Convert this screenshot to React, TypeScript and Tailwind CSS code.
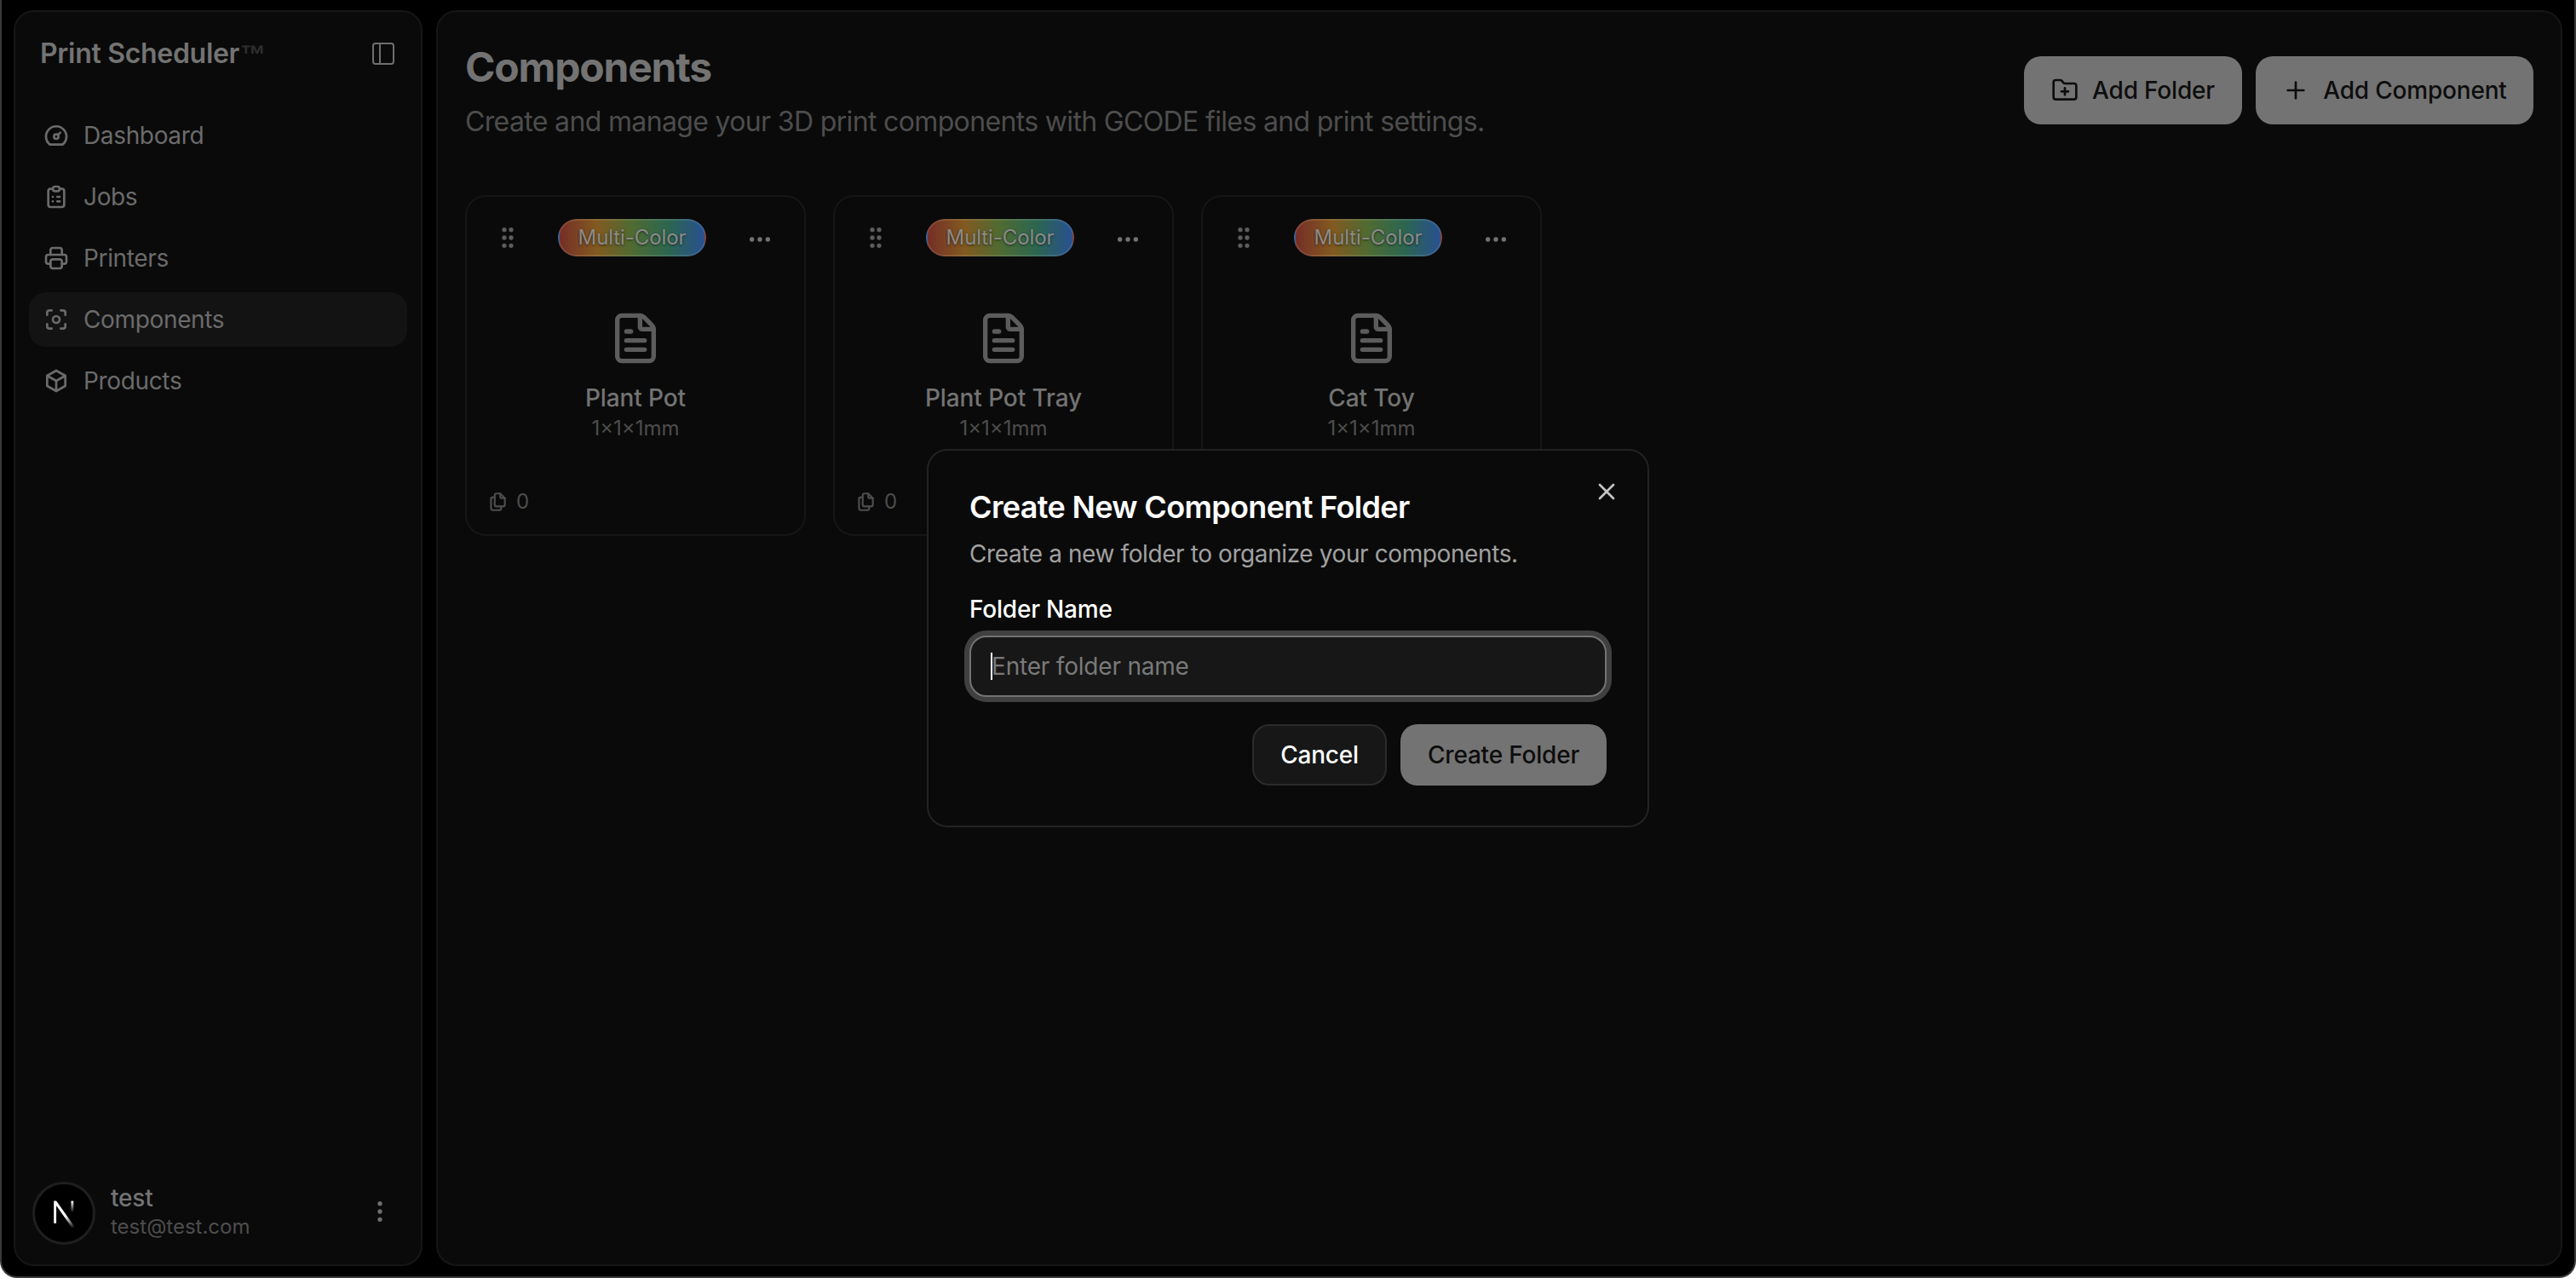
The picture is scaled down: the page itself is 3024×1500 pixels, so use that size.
import { EllipsisVertical, Ellipsis, FileText, FolderPlus, GripVertical, PanelLeft, Plus, X } from "lucide-react";
import { TbBox, TbCapture, TbClipboardList, TbDashboard, TbFiles, TbPrinter } from "react-icons/tb";

const navItems = [
  { label: "Dashboard", icon: TbDashboard },
  { label: "Jobs", icon: TbClipboardList },
  { label: "Printers", icon: TbPrinter },
  { label: "Components", icon: TbCapture, active: true },
  { label: "Products", icon: TbBox },
];

const components = ["Plant Pot", "Plant Pot Tray", "Cat Toy"];

function Sidebar() {
  return (
    <aside className="flex h-full w-[480px] shrink-0 flex-col rounded-[24px] border-2 border-[#161616] bg-[#0a0a0a]">
      <div className="flex items-center justify-between pl-[29px] pr-[28px] pt-[29px]">
        <div className="flex items-baseline text-[32px] leading-[40px] font-semibold tracking-[-0.3px] text-[#737373]">
          Print Scheduler
          <span className="ml-[1px] font-['Liberation_Sans',sans-serif] text-[30px] font-bold text-[#2e2e2e]">™</span>
        </div>
        <PanelLeft className="-mt-[2px] h-8 w-8 text-[#6e6e6e]" strokeWidth={1.5} />
      </div>

      {/* 导航 */}
      <nav className="mt-[43px] flex flex-col gap-2 px-4">
        {navItems.map((item) => (
          <div
            key={item.label}
            className={
              item.active
                ? "flex h-16 items-center gap-4 rounded-[20px] bg-[#131313] px-4 text-[28px] tracking-[-0.35px] text-[#6b6b6b]"
                : "flex h-16 items-center gap-4 rounded-[20px] px-4 text-[28px] tracking-[-0.35px] text-[#6b6b6b]"
            }
          >
            <item.icon className="h-8 w-8 shrink-0" strokeWidth={2} />
            <span>{item.label}</span>
          </div>
        ))}
      </nav>

      {/* 用户 */}
      <div className="mt-auto flex items-center pb-[23px] pl-[20px] pr-[32px]">
        <div className="flex h-[74px] w-[74px] shrink-0 items-center justify-center rounded-full border-[3px] border-[#1f1f1f] bg-black">
          <svg viewBox="0 0 32 32" className="h-[42px] w-[42px]">
            <defs>
              <linearGradient id="nextDiag" x1="0" y1="0" x2="1" y2="1">
                <stop offset="0.55" stopColor="#ffffff" />
                <stop offset="1" stopColor="#ffffff" stopOpacity="0" />
              </linearGradient>
              <linearGradient id="nextBar" x1="0" y1="0" x2="0" y2="1">
                <stop offset="0" stopColor="#ffffff" />
                <stop offset="0.8" stopColor="#ffffff" stopOpacity="0" />
              </linearGradient>
            </defs>
            <path d="M7 5h2.2L26 28.5h-3L9.2 9.2V25H7z" fill="url(#nextDiag)" />
            <rect x="22.4" y="5" width="2.2" height="13" fill="url(#nextBar)" />
          </svg>
        </div>
        <div className="mb-[5px] ml-[18px] flex min-w-0 flex-1 flex-col">
          <span className="text-[28px] leading-[36px] font-medium tracking-[-0.2px] text-[#737373]">test</span>
          <span className="text-[24px] leading-[32px] text-[#4d4d4d]">test@test.com</span>
        </div>
        <EllipsisVertical className="mb-[4px] h-8 w-8 text-[#6e6e6e]" />
      </div>
    </aside>
  );
}

function ComponentCard({ name }: { name: string }) {
  return (
    <div className="flex h-[400px] w-[400px] flex-col rounded-[24px] border-2 border-[#161616] bg-[#0a0a0a]">
      <div className="flex items-center justify-between pl-[32px] pr-[36px] pt-[26px]">
        <GripVertical className="h-8 w-8 text-[#5c5c5c]" />
        <span className="-ml-[4px] flex h-[44px] w-[174px] items-center justify-center rounded-full border-2 border-white/10 bg-[linear-gradient(90deg,#752e27,#82591f,#4f6b32,#2c6650,#28508f)] text-[24px] tracking-[-0.1px] text-[#8a8a8a] [text-shadow:0_1px_3px_rgba(0,0,0,0.6)]">
          Multi-Color
        </span>
        <Ellipsis className="mt-[4px] h-8 w-8 text-[#737373]" />
      </div>
      <div className="mt-[64px] flex flex-col items-center">
        <FileText className="h-16 w-16 text-[#5c5c5c]" />
        <span className="mt-[20px] text-[28px] leading-[36px] font-medium tracking-[-0.1px] text-[#737373]">{name}</span>
        <span className="mt-[2px] text-[24px] leading-[32px] text-[#4d4d4d]">1×1×1mm</span>
      </div>
      <div className="mt-auto flex items-center gap-[9px] pb-[22px] pl-[23px] text-[24px] leading-[32px] text-[#4d4d4d]">
        <TbFiles className="h-[26px] w-[26px]" />
        <span>0</span>
      </div>
    </div>
  );
}

function FolderDialog() {
  return (
    <div className="absolute left-[1086px] top-[527px] flex h-[444px] w-[848px] flex-col rounded-[24px] border-2 border-[#232323] bg-[#0a0a0a] px-[48px] pt-[44px]">
      <X className="absolute right-[32px] top-[32px] h-8 w-8 text-[#c4c4c4]" />
      <h2 className="text-[36px] leading-[44px] font-semibold tracking-[-0.65px] text-white">Create New Component Folder</h2>
      <p className="mt-[13px] text-[28px] leading-[40px] tracking-[-0.4px] text-[#a1a1a1]">
        Create a new folder to organize your components.
      </p>
      <label className="mt-[27px] text-[28px] leading-[36px] font-medium tracking-[-0.2px] text-white">Folder Name</label>
      <div className="relative mt-[13px]">
        <input
          readOnly
          placeholder="Enter folder name"
          className="h-[72px] w-full rounded-[20px] border-2 border-[#737373] bg-[#171717] px-[24px] text-[28px] tracking-[-0.2px] outline-none ring-[6px] ring-[#404040] placeholder:text-[#7a7a7a]"
        />
        <span className="absolute left-[25px] top-[20px] h-[32px] w-[2px] bg-white" />
      </div>
      <div className="mt-[32px] flex justify-end gap-[16px]">
        <button className="h-[72px] w-[158px] rounded-[20px] border-2 border-[#2b2b2b] bg-[#171717] text-[28px] font-medium tracking-[-0.2px] text-white">
          Cancel
        </button>
        <button className="h-[72px] w-[242px] rounded-[20px] bg-[#737373] text-[28px] font-medium tracking-[-0.2px] text-[#0d0d0d]">
          Create Folder
        </button>
      </div>
    </div>
  );
}

export default function App() {
  return (
    <div className="relative h-[1500px] w-[3024px] overflow-hidden rounded-b-[20px] border-x-2 border-b-2 border-[#3a3a3a] bg-black font-['Inter',sans-serif]">
      <div className="flex h-[1486px] gap-4 pl-[14px] pr-[14px] pt-[12px]">
        <Sidebar />
        <main className="flex h-full min-w-0 flex-1 flex-col rounded-[24px] border-2 border-[#161616] bg-[#0a0a0a] px-[32px]">
          <div className="flex items-start justify-between pt-[37px]">
            <div>
              <h1 className="text-[48px] leading-[56px] font-bold tracking-[-1.2px] text-[#737373]">Components</h1>
              <p className="mt-[14px] text-[32px] leading-[44px] tracking-[-0.65px] text-[#4d4d4d]">
                Create and manage your 3D print components with GCODE files and print settings.
              </p>
            </div>
            <div className="mt-[15px] flex gap-4">
              <button className="flex h-[80px] w-[256px] items-center justify-center gap-[16px] rounded-[20px] bg-[#737373] text-[28px] font-medium tracking-[-0.2px] text-[#0d0d0d]">
                <FolderPlus className="h-8 w-8" />
                Add Folder
              </button>
              <button className="flex h-[80px] w-[326px] items-center justify-center gap-[16px] rounded-[20px] bg-[#737373] text-[28px] font-medium tracking-[-0.2px] text-[#0d0d0d]">
                <Plus className="h-8 w-8" />
                Add Component
              </button>
            </div>
          </div>
          <div className="mt-[64px] flex gap-[32px]">
            {components.map((name) => (
              <ComponentCard key={name} name={name} />
            ))}
          </div>
        </main>
      </div>
      <FolderDialog />
    </div>
  );
}
